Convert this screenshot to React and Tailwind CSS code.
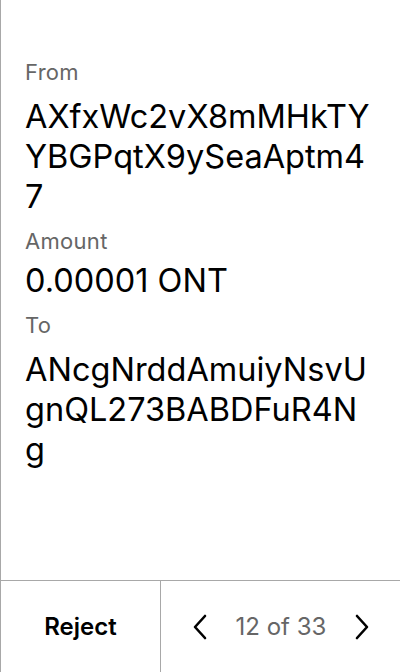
import React from 'react';

const font = { fontFamily: 'Inter, "Noto Sans", sans-serif' };

function Field({ label, value, gap = 'mt-[11px]' }) {
    return (
        <div className="flex flex-col">
            <p className="text-[22px] leading-[28px] text-[#666666] tracking-[0.3px]">{label}</p>
            <p className={`${gap} text-[32.5px] leading-[40px] text-black break-all`}>{value}</p>
        </div>
    );
}

export default function App() {
    return (
        <div className="h-screen w-full flex flex-col bg-white border-l border-[#a8a8a8]" style={font}>
            <div className="flex-1 flex flex-col gap-[10px] pl-6 pr-6 pt-[58px]">
                <Field label="From" value="AXfxWc2vX8mMHkTYYBGPqtX9ySeaAptm47" />
                <Field label="Amount" value="0.00001 ONT" gap="mt-[6px]" />
                <Field label="To" value="ANcgNrddAmuiyNsvUgnQL273BABDFuR4Ng" />
            </div>
            <div className="h-[92px] flex border-t border-[#a8a8a8]">
                <button className="w-[159px] flex items-center justify-center text-[24px] font-semibold text-black">
                    Reject
                </button>
                <div className="flex-1 flex items-center justify-between border-l border-[#a8a8a8] pl-[29px] pr-[28px]">
                    <svg width="20" height="28" viewBox="0 0 20 28" fill="none" stroke="black" strokeWidth="2.6" strokeLinecap="round" strokeLinejoin="round">
                        <path d="M15 3 L5 14 L15 25" />
                    </svg>
                    <span className="text-[24px] text-[#666666]">12 of 33</span>
                    <svg width="20" height="28" viewBox="0 0 20 28" fill="none" stroke="black" strokeWidth="2.6" strokeLinecap="round" strokeLinejoin="round">
                        <path d="M5 3 L15 14 L5 25" />
                    </svg>
                </div>
            </div>
        </div>
    );
}
